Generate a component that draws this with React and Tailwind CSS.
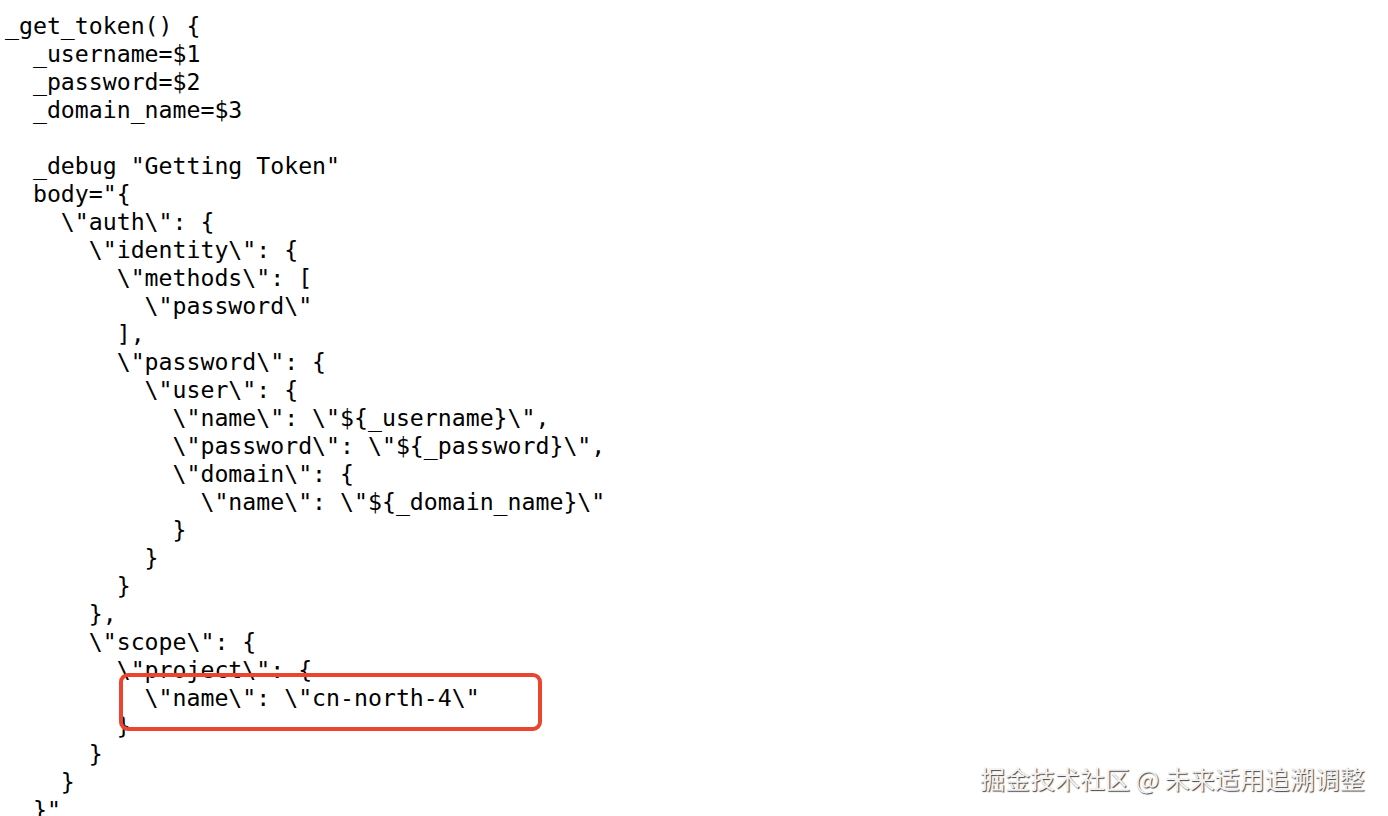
const lines = [
  "_get_token() {",
  "  _username=$1",
  "  _password=$2",
  "  _domain_name=$3",
  "",
  '  _debug "Getting Token"',
  '  body="{',
  '    \\"auth\\": {',
  '      \\"identity\\": {',
  '        \\"methods\\": [',
  '          \\"password\\"',
  "        ],",
  '        \\"password\\": {',
  '          \\"user\\": {',
  '            \\"name\\": \\"${_username}\\",',
  '            \\"password\\": \\"${_password}\\",',
  '            \\"domain\\": {',
  '              \\"name\\": \\"${_domain_name}\\"',
  "            }",
  "          }",
  "        }",
  "      },",
  '      \\"scope\\": {',
  '        \\"project\\": {',
  '          \\"name\\": \\"cn-north-4\\"',
  "        }",
  "      }",
  "    }",
  '  }"',
];

export default function App() {
  return (
    <div className="relative w-[1388px] h-[816px] overflow-hidden bg-white">
      <pre className="pl-[5px] pt-[12px] text-[23.2px] leading-[28px] text-black font-['DejaVu_Sans_Mono',monospace]">
        {lines.map((l, i) => (
          <div key={i} className="h-[28px] whitespace-pre">
            {l}
          </div>
        ))}
      </pre>

      {/* highlight box */}
      <div className="absolute left-[119px] top-[673px] w-[423px] h-[58px] border-4 border-[#e9452f] rounded-[9px]" />

      {/* watermark */}
      <div className="absolute left-[980px] top-[762px] text-[25px] leading-[32px] text-[#f2f2f2] font-['Noto_Sans_CJK_SC',sans-serif] [text-shadow:1px_1px_1px_#444]">
        掘金技术社区 @ 未来适用追溯调整
      </div>
    </div>
  );
}
